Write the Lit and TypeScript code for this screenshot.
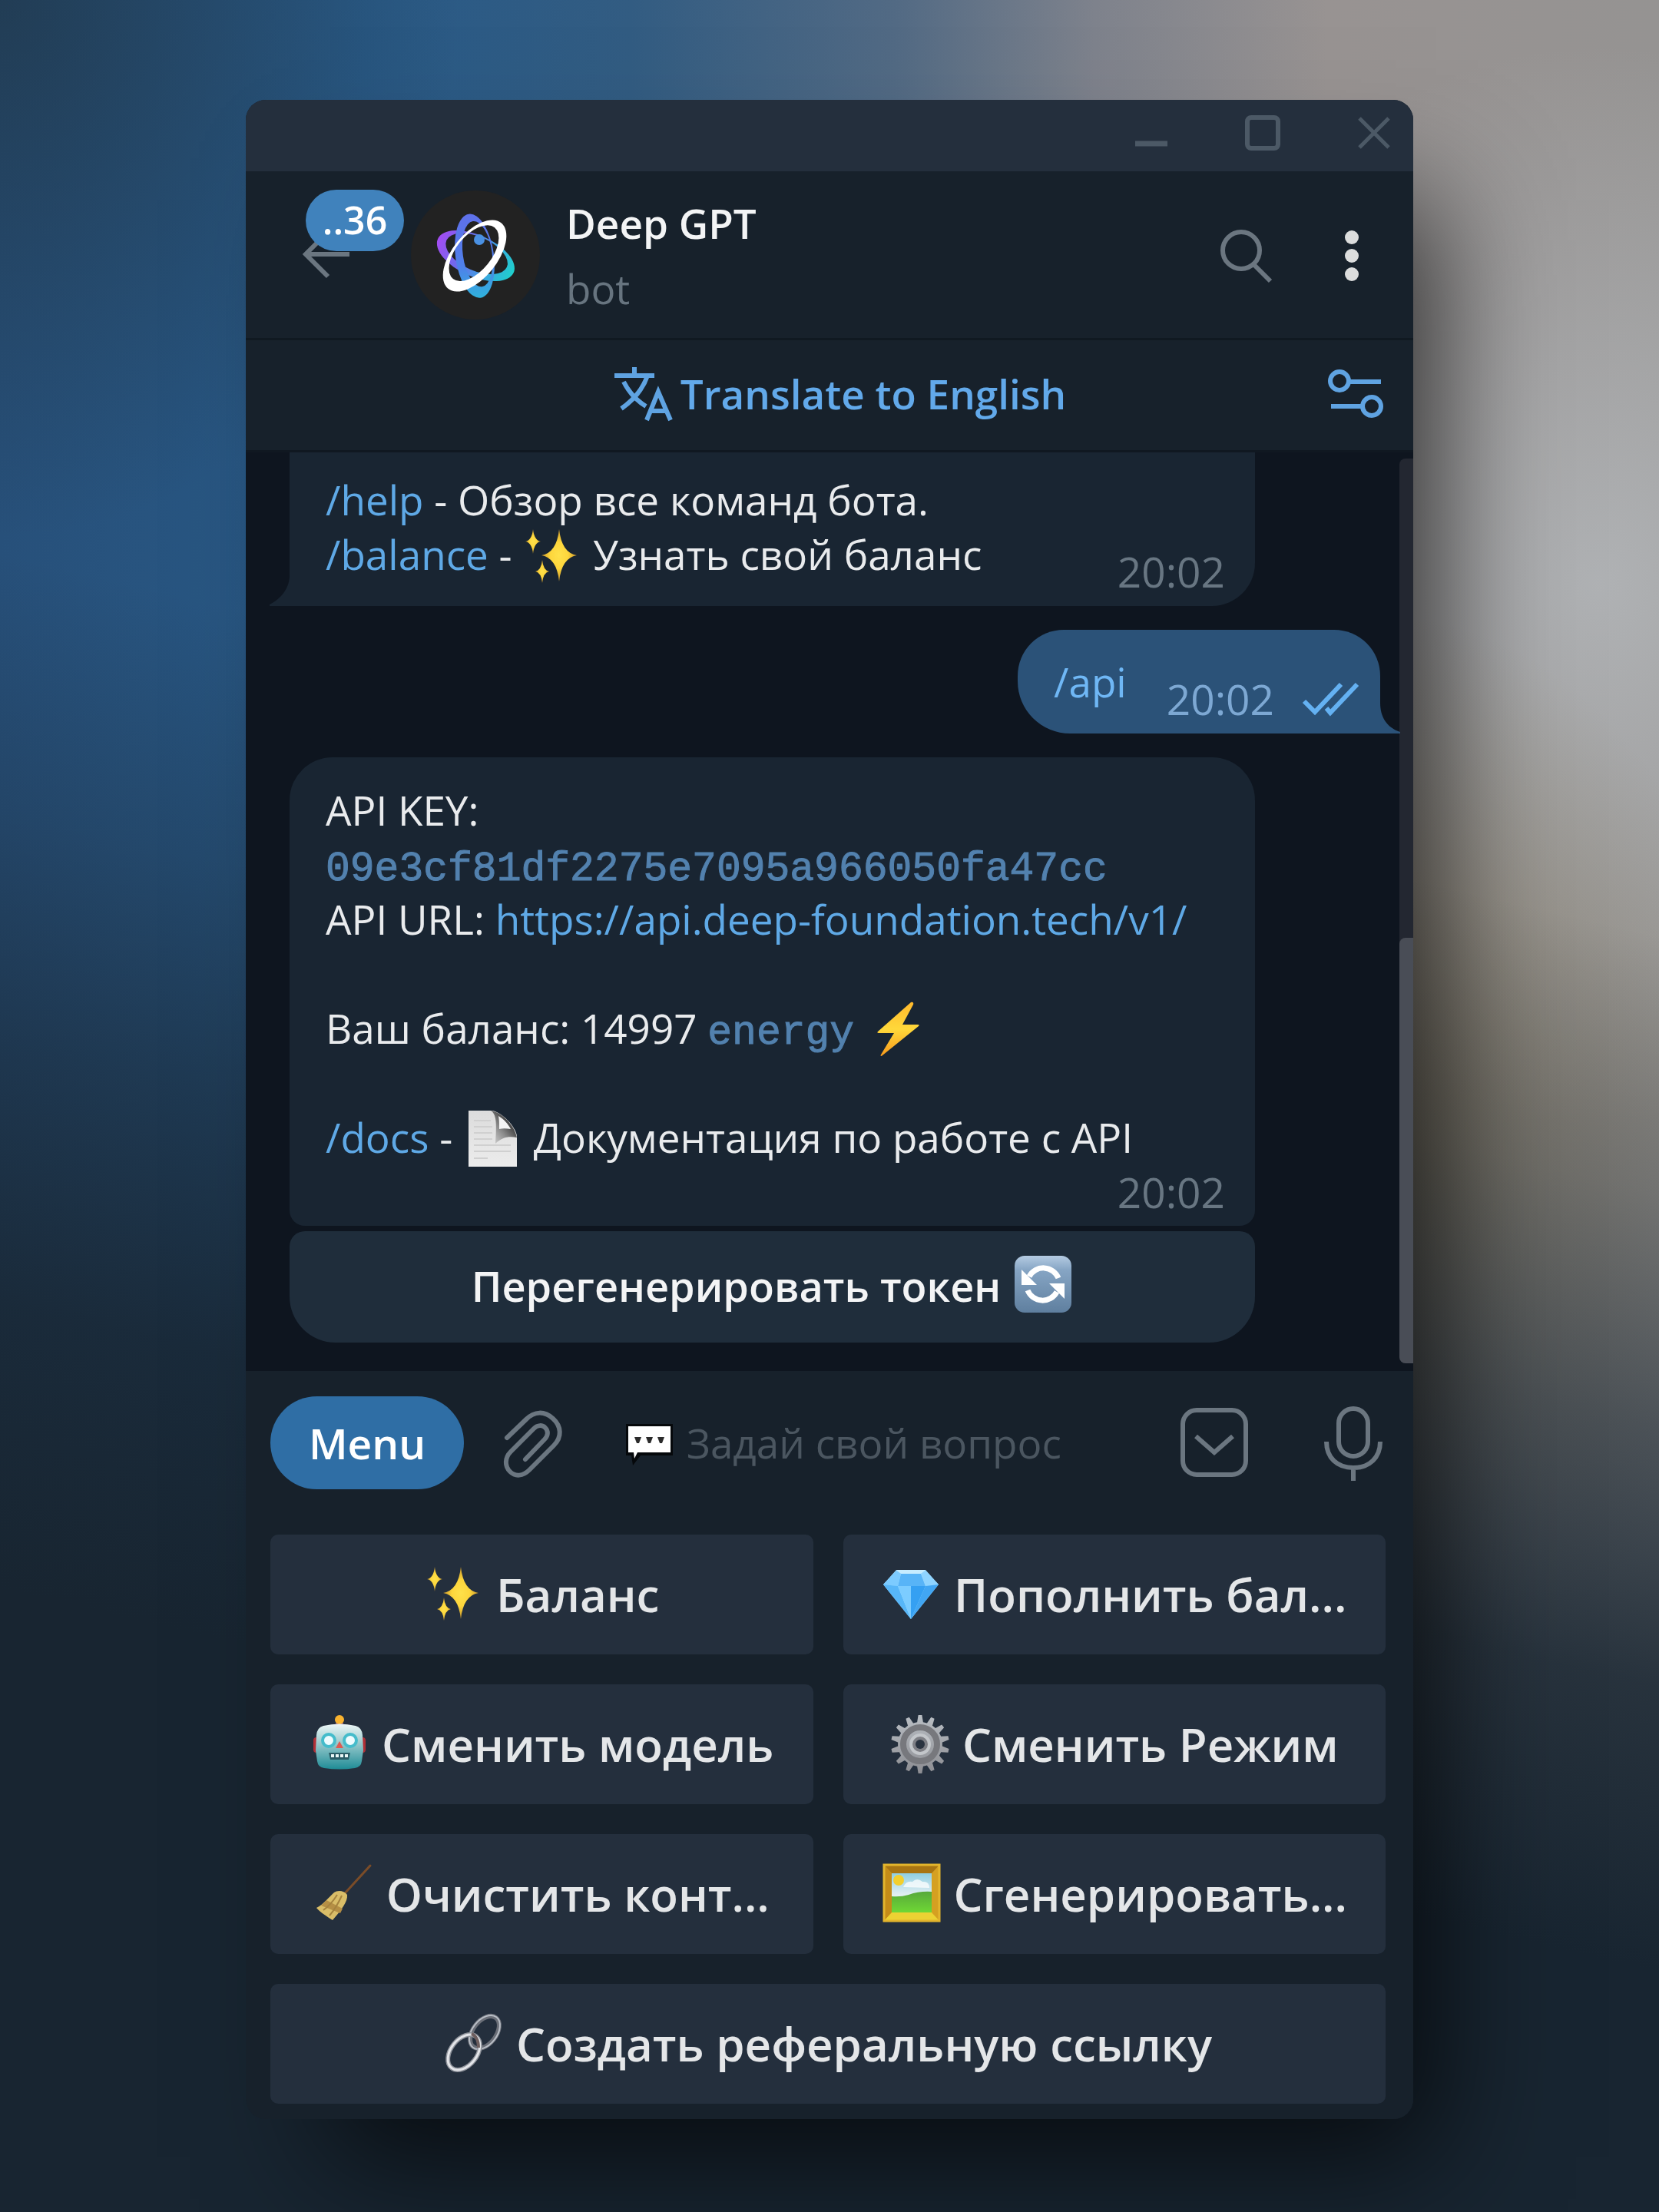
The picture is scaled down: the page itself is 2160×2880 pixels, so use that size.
import { LitElement, html, svg, css, type SVGTemplateResult, type TemplateResult } from "lit";
import { customElement, property } from "lit/decorators.js";

/* ---------- geometry helpers ---------- */

const ellipse = (cx: number, cy: number, rx: number, ry: number) =>
  `M${cx - rx} ${cy}a${rx} ${ry} 0 1 0 ${2 * rx} 0a${rx} ${ry} 0 1 0 ${-2 * rx} 0Z`;

const star = (cx: number, cy: number, rx: number, ry: number) => {
  const kx = rx * 0.14;
  const ky = ry * 0.1;
  return (
    `M${cx} ${cy - ry}Q${cx + kx} ${cy - ky} ${cx + rx} ${cy}` +
    `Q${cx + kx} ${cy + ky} ${cx} ${cy + ry}` +
    `Q${cx - kx} ${cy + ky} ${cx - rx} ${cy}` +
    `Q${cx - kx} ${cy - ky} ${cx} ${cy - ry}Z`
  );
};

const gearPath = (c: number, outer: number, inner: number, teeth: number) => {
  const step = (Math.PI * 2) / teeth;
  const points: string[] = [];
  for (let i = 0; i < teeth; i++) {
    const a = i * step;
    for (const [r, t] of [[inner, -0.3], [outer, -0.14], [outer, 0.14], [inner, 0.3]]) {
      points.push(`${(c + r * Math.sin(a + t * step)).toFixed(2)} ${(c - r * Math.cos(a + t * step)).toFixed(2)}`);
    }
  }
  return `M${points.join("L")}Z`;
};

/* ---------- emoji, each on a 78 x 78 canvas ---------- */

const EMOJI: Record<string, SVGTemplateResult> = {
  sparkles: svg`
    <defs><radialGradient id="sp"><stop offset="0" stop-color="#ffe14a"/><stop offset=".5" stop-color="#fdd63c"/><stop offset="1" stop-color="#c9962a"/></radialGradient></defs>
    <path fill="url(#sp)" d="${star(48, 37, 23, 34)}"/>
    <path fill="url(#sp)" d="${star(14, 19, 10, 16)}"/>
    <path fill="url(#sp)" d="${star(26, 58, 9, 15)}"/>`,
  bolt: svg`
    <defs><linearGradient id="bo" x1="0" y1="0" x2="0" y2="1"><stop offset="0" stop-color="#ffb92c"/><stop offset=".5" stop-color="#ffd83a"/><stop offset="1" stop-color="#f79a1c"/></linearGradient></defs>
    <path fill="url(#bo)" d="M60 2 17 40c-1 1-1 2 1 2h20L21 70c-1 2 0 3 2 1l47-38c1-1 1-2-1-2H49L63 5c1-3-1-4-3-3Z"/>`,
  page: svg`
    <defs>
      <linearGradient id="pa" x1="0" y1="0" x2="0" y2="1"><stop offset="0" stop-color="#dcdcdc"/><stop offset="1" stop-color="#ececec"/></linearGradient>
      <linearGradient id="pb" x1="1" y1="0" x2="0" y2="1"><stop offset=".35" stop-color="#4a4a4a"/><stop offset=".6" stop-color="#8a8a8a"/><stop offset="1" stop-color="#dadada"/></linearGradient>
    </defs>
    <path fill="url(#pa)" d="M7 1h31c12 2 30 20 32 33v40H7Z"/>
    <path stroke="#d0d0d0" stroke-width="2" fill="none" d="M14 14h22M14 22h24M14 30h24M14 38h24M14 46h48M14 54h48M14 63h18"/>
    <path fill="url(#pb)" d="M36 1c7 5 8 14 6 43 9-9 18-10 28-8C67 20 50 3 36 1Z"/>
    <path fill="#f4f4f4" d="M46 8c7 4 13 11 16 17-6-1-11-1-15 0 0-7 0-11-1-17Z"/>`,
  refresh: svg`
    <defs><linearGradient id="re" x1="0" y1="0" x2="0" y2="1"><stop offset="0" stop-color="#b4cbe2"/><stop offset=".25" stop-color="#86a5c4"/><stop offset="1" stop-color="#5f7f9f"/></linearGradient></defs>
    <rect x="2" y="0" width="74" height="74" rx="13" fill="url(#re)"/>
    <path fill="none" stroke="#fff" stroke-width="7" d="M59 29A21 21 0 0 0 21 27M19 45A21 21 0 0 0 57 47"/>
    <path fill="#fff" d="M11 18v20h20ZM67 56V36H47Z"/>`,
  gem: svg`
    <path fill="#9fdcff" d="M19 7h38l17 19-36 45L2 26Z"/>
    <path fill="#c6ecff" d="M19 7h38l-6 5H25Z"/>
    <path fill="#58b4f7" d="M25 12h26l6 16H21Z"/>
    <path fill="#7ccbff" d="M2 26 19 8l6 4-4 16Z"/>
    <path fill="#8fd4ff" d="m74 26-17-18-6 4 6 16Z"/>
    <path fill="#57b6f8" d="m2 26 19 2 17 43Z"/>
    <path fill="#41a6f3" d="m74 26-17 2-19 43Z"/>
    <path fill="#7cccff" d="M21 28h17v43Z"/>
    <path fill="#35a0f2" d="M57 28H38v43Z"/>`,
  robot: svg`
    <defs><linearGradient id="ro" x1="0" y1="0" x2="0" y2="1"><stop offset="0" stop-color="#eef7f7"/><stop offset=".35" stop-color="#a9d2d4"/><stop offset="1" stop-color="#1f8c96"/></linearGradient></defs>
    <path fill="#7b4c86" d="M34 11h10v6H34z"/>
    <circle cx="39" cy="7" r="6" fill="#f9b32f"/>
    <rect x="5" y="30" width="10" height="20" rx="4" fill="#b02f36"/><rect x="63" y="30" width="10" height="20" rx="4" fill="#b02f36"/>
    <path fill="url(#ro)" d="M18 15q21-5 42 0 8 2 9 12l1 20-2 14q-1 8-9 9-20 3-40 0-8-1-9-9L8 47l1-20q1-10 9-12Z"/>
    <circle cx="25" cy="34" r="8" fill="#eefcff" stroke="#45bccb" stroke-width="4"/>
    <circle cx="53" cy="34" r="8" fill="#eefcff" stroke="#45bccb" stroke-width="4"/>
    <path fill="#dd5a52" d="m39 35 5 9H34Z"/>
    <path fill="#2a5c66" d="M25 50h28l-2 9H27Z"/>
    <path stroke="#e9f6f6" stroke-width="4" stroke-dasharray="4 2" d="M28 54h23"/>`,
  gear: svg`
    <defs><linearGradient id="ge" x1="0" y1="0" x2="0" y2="1"><stop offset="0" stop-color="#b9bec4"/><stop offset="1" stop-color="#8c8d92"/></linearGradient></defs>
    <path fill="url(#ge)" d="${gearPath(39, 38, 29, 14)}"/>
    <circle cx="39" cy="39" r="22" fill="none" stroke="#77787d" stroke-width="8"/>
    <circle cx="39" cy="39" r="12" fill="#7e7f85" stroke="#c3c6ca" stroke-width="4"/>
    <circle cx="39" cy="39" r="6" fill="#2a3340"/>`,
  broom: svg`
    <path stroke="#7a4c28" stroke-width="3" stroke-linecap="round" d="M73 2 40 38"/>
    <path fill="#d9bd68" d="M26 37c4-3 13-3 17 3 1 9-8 20-19 33C18 69 8 63 3 57 13 52 18 44 26 37Z"/>
    <path fill="#b58f45" d="m16 47 21 11-3 6L9 54Z"/>
    <path fill="none" stroke="#a5833e" stroke-width="2" d="M12 60c7-5 13-12 18-20M20 67c7-8 12-17 16-26"/>`,
  picture: svg`
    <defs>
      <linearGradient id="pi" x1="0" y1="0" x2="0" y2="1"><stop offset="0" stop-color="#8fcfe2"/><stop offset=".55" stop-color="#e2eff2"/></linearGradient>
      <linearGradient id="pg" x1="0" y1="0" x2="0" y2="1"><stop offset="0" stop-color="#57a93a"/><stop offset="1" stop-color="#6fd835"/></linearGradient>
    </defs>
    <path fill="#d5a021" d="M2 0h74v75H2z"/>
    <path fill="#a97512" d="M2 0h74L65 12H13Z"/>
    <path fill="#c48c18" d="M2 0v75l11-12V12Z"/>
    <path fill="#ecd233" d="M2 75h74L65 63H13Z"/>
    <path fill="none" stroke="#e3b52c" stroke-width="3" d="M3 1h72v73H3z"/>
    <path fill="url(#pi)" d="M13 12h52v51H13z"/>
    <circle cx="22" cy="21" r="7" fill="#f3cf2d"/>
    <path fill="#fff" opacity=".75" d="M28 30q4-9 12-7 6-6 13 0 9-1 9 8Z"/>
    <path fill="url(#pg)" d="M13 42q12 1 22-2 14-5 30-4v27H13Z"/>`,
  link: svg`
    <g fill="none" stroke-width="6">
      <ellipse cx="53" cy="24" rx="15" ry="24" transform="rotate(38 53 24)" stroke="#6b6f78"/>
      <ellipse cx="53" cy="24" rx="16" ry="25" transform="rotate(38 53 24)" stroke="#b9bec6" stroke-width="2"/>
      <ellipse cx="26" cy="50" rx="17" ry="26" transform="rotate(38 26 50)" stroke="#8f939b"/>
      <ellipse cx="26" cy="50" rx="17" ry="26" transform="rotate(38 26 50)" stroke="#e3e5e9" stroke-width="3"/>
      <path d="M36 26q9 4 9 18" stroke="#6d5e5e" stroke-width="4"/>
    </g>`,
  speech: svg`
    <path fill="#05080b" d="M9 11h61v41H28L18 65l-2-13H9Z"/>
    <path fill="#fff" d="M12 14h55v34H24l-4 8-1-8h-7Z"/>
    <path fill="#2b2b2b" d="M20 28h9l-3 8h-3ZM35 28h9l-3 8h-3ZM50 28h9l-3 8h-3Z"/>`,
};

const emoji = (name: string): TemplateResult =>
  html`<svg class="emoji" viewBox="0 0 78 78" aria-hidden="true">${EMOJI[name]}</svg>`;

const emojiStyles = css`
  .emoji {
    display: inline-block;
    width: 78px;
    height: 78px;
    flex: none;
    margin: -10px 0;
    vertical-align: -12px;
  }
`;

const resetStyles = css`
  * { box-sizing: border-box; }
  button {
    font: inherit;
    color: inherit;
    background: none;
    border: 0;
    margin: 0;
    padding: 0;
    cursor: pointer;
  }
  a { color: inherit; text-decoration: none; }
  svg { display: block; overflow: visible; }
`;

/* ---------- message bubble ---------- */

@customElement("chat-message")
export class ChatMessage extends LitElement {
  @property({ type: Boolean, reflect: true }) out = false;
  @property({ type: Boolean, reflect: true }) stacked = false;
  @property() time = "";

  static styles = [
    resetStyles,
    css`
      :host { display: block; }
      .bubble {
        position: relative;
        display: flex;
        align-items: flex-end;
        justify-content: space-between;
        padding: 32px 39px 10px 47px;
        background: #192532;
        color: #e9ebed;
      }
      .text { margin-bottom: 22px; }
      .meta {
        display: flex;
        align-items: center;
        gap: 38px;
        color: #687682;
        font-size: 55px;
      }
      .cut { padding-top: 26px; border-radius: 0 0 56px 0; }
      .full {
        flex-direction: column;
        align-items: stretch;
        padding-top: 33px;
        padding-bottom: 9px;
        border-radius: 56px 56px 20px 20px;
      }
      .full .text { margin: 0; }
      .full .meta { align-self: flex-end; }
      .sent {
        gap: 52px;
        padding-right: 28px;
        background: #2b5278;
        color: #6fb7f5;
        border-radius: 60px 60px 0 68px;
      }
      .sent .meta { color: #7da8d3; }
      .tail {
        position: absolute;
        bottom: 0;
        width: 26px;
        height: 40px;
        fill: #192532;
      }
      .left { right: 100%; }
      .right { left: 100%; fill: #2b5278; }
      .checks { width: 72px; height: 42px; fill: none; stroke: #64b1f2; stroke-width: 6; }
    `,
  ];

  render() {
    const kind = this.out ? "sent" : this.stacked ? "full" : "cut";
    return html`
      <div class="bubble ${kind}">
        <div class="text"><slot></slot></div>
        <div class="meta">
          <time>${this.time}</time>
          ${this.out
            ? html`<svg class="checks" viewBox="0 0 72 42" role="img" aria-label="Прочитано">
                <path d="M1 24 15 38 49 2M30 33l5 6L70 2" />
              </svg>`
            : ""}
        </div>
        ${this.stacked
          ? ""
          : this.out
            ? html`<svg class="tail right" viewBox="0 0 26 40"><path d="M-1 0H0C0 18 8 32 26 38V40H-1Z" /></svg>`
            : html`<svg class="tail left" viewBox="0 0 26 40"><path d="M27 0H26C26 16 16 30 0 38V40H27Z" /></svg>`}
      </div>
    `;
  }
}

/* ---------- reply keyboard ---------- */

interface Key {
  icon: string;
  label: string;
  wide?: boolean;
}

@customElement("reply-keyboard")
export class ReplyKeyboard extends LitElement {
  @property({ attribute: false }) keys: Key[] = [];

  static styles = [
    resetStyles,
    emojiStyles,
    css`
      :host {
        display: grid;
        grid-template-columns: 1fr 1fr;
        gap: 39px;
        padding: 27px 36px 20px 32px;
      }
      .key {
        display: flex;
        align-items: center;
        justify-content: center;
        gap: 16px;
        min-width: 0;
        height: 156px;
        border-radius: 10px;
        background: #242f3d;
        color: #e4e6e8;
        font-size: 60px;
        font-weight: 600;
        white-space: nowrap;
      }
      .wide { grid-column: 1 / -1; }
    `,
  ];

  render() {
    return this.keys.map(
      (key) => html`<button class="key ${key.wide ? "wide" : ""}" type="button">
        ${emoji(key.icon)}<span>${key.label}</span>
      </button>`,
    );
  }
}

/* ---------- window ---------- */

@customElement("app-root")
export class AppRoot extends LitElement {
  private keys: Key[] = [
    { icon: "sparkles", label: "Баланс" },
    { icon: "gem", label: "Пополнить бал..." },
    { icon: "robot", label: "Сменить модель" },
    { icon: "gear", label: "Сменить Режим" },
    { icon: "broom", label: "Очистить конт..." },
    { icon: "picture", label: "Сгенерировать..." },
    { icon: "link", label: "Создать реферальную ссылку", wide: true },
  ];

  static styles = [
    resetStyles,
    emojiStyles,
    css`
      :host {
        display: block;
        min-height: 100vh;
        box-sizing: border-box;
        padding: 130px min(320px, 15vw) 120px;
        font: 400 53px/71px "Open Sans", "Noto Sans", sans-serif;
        background:
          radial-gradient(ellipse 600px 700px at 0 0, rgba(30, 48, 60, 0.6), transparent),
          linear-gradient(193deg, rgba(24, 37, 49, 0) 36%, rgba(24, 37, 49, 0.25) 46%, rgba(24, 37, 49, 0.58) 55%, rgba(24, 37, 49, 0.88) 65%, #182531 76%),
          radial-gradient(ellipse 500px 700px at 1800px 1500px, rgba(112, 98, 62, 0.5), transparent),
          radial-gradient(ellipse 600px 700px at 2080px 760px, rgba(180, 183, 186, 0.85), transparent),
          linear-gradient(90deg, #27507a 0, #295a87 22%, #325c82 38%, #526a84 54%, #7e828c 66%, #989392 80%, #959392 100%);
      }
      .window {
        display: flex;
        flex-direction: column;
        overflow: hidden;
        border-radius: 26px;
        background: #17212b;
      }
      .shadow {
        border-radius: 26px;
        box-shadow: 70px 90px 150px -40px rgba(0, 0, 0, 0.7);
      }
      .titlebar {
        display: flex;
        justify-content: flex-end;
        align-items: center;
        gap: 97px;
        height: 93px;
        padding: 0 27px 7px 0;
        background: #242f3d;
      }
      .caption { width: 48px; height: 48px; fill: none; stroke: #4c5966; stroke-width: 5; }
      .header {
        display: flex;
        align-items: center;
        height: 220px;
        padding: 0 56px 0 74px;
        border-bottom: 3px solid #101921;
      }
      .back { position: relative; margin-right: 77px; }
      .arrow { width: 64px; height: 64px; fill: none; stroke: #6b7680; stroke-width: 6; }
      .badge {
        position: absolute;
        left: 4px;
        top: -53px;
        min-width: 128px;
        height: 80px;
        border-radius: 40px;
        background: #4082bc;
        color: #fff;
        font-size: 50px;
        font-weight: 600;
        line-height: 78px;
        text-align: center;
      }
      .avatar { width: 168px; height: 168px; }
      .peer { flex: 1; padding: 3px 0 0 34px; line-height: 85px; }
      .name { margin: 0; font-size: inherit; font-weight: 600; color: #f3f4f5; }
      .status { margin: 0; color: #67747f; }
      .tools { display: flex; align-items: center; gap: 77px; padding-top: 3px; }
      .search { width: 72px; height: 72px; fill: none; stroke: #6b7680; stroke-width: 6; }
      .dots { width: 48px; height: 72px; fill: #dcdddd; }
      .translate {
        display: flex;
        align-items: center;
        height: 146px;
        padding: 0 36px 4px 139px;
        border-bottom: 3px solid #101821;
        color: #62a9ea;
      }
      .offer {
        display: flex;
        flex: 1;
        justify-content: center;
        align-items: center;
        gap: 11px;
        font-weight: 600;
      }
      .glyph { width: 76px; height: 76px; fill: none; stroke: #5fa3e2; stroke-width: 6; }
      .chat {
        display: flex;
        background: #0e151f;
      }
      .feed {
        display: flex;
        flex: 1;
        flex-direction: column;
        gap: 31px;
        min-width: 0;
        padding: 0 25px 37px 57px;
      }
      .incoming { margin-right: 163px; }
      .outgoing { align-self: flex-end; }
      .group { display: flex; flex-direction: column; gap: 7px; }
      .regen {
        display: flex;
        justify-content: center;
        align-items: center;
        gap: 16px;
        height: 145px;
        padding-bottom: 3px;
        border-radius: 20px 20px 60px 60px;
        background: #1f2d3b;
        color: #f3f4f5;
        font-size: 54px;
        font-weight: 600;
      }
      .ref { color: #5fa9e6; }
      .mono {
        font-family: "Liberation Mono", monospace;
        line-height: 1;
        color: #5281ae;
        -webkit-text-stroke: 1px #5281ae;
      }
      .para { margin: 0 0 71px; }
      .last { margin: 0; }
      .rail {
        display: flex;
        flex-direction: column;
        justify-content: flex-end;
        width: 18px;
        margin: 8px 0 10px;
        border-radius: 8px 0 0 8px;
        background: #232731;
      }
      .thumb { height: 47%; border-radius: 8px 0 0 8px; background: #494d56; }
      .compose {
        display: flex;
        align-items: center;
        height: 186px;
        padding: 0 38px 0 32px;
      }
      .menu {
        width: 252px;
        height: 121px;
        border-radius: 61px;
        background: #2f6ea5;
        color: #fff;
        font-size: 55px;
        font-weight: 600;
      }
      .icon { width: 80px; height: 96px; fill: none; stroke: #6b7680; stroke-width: 6; }
      .attach { margin: 0 72px 0 50px; }
      .toggle { margin-right: 100px; }
      .field { display: flex; flex: 1; align-items: center; gap: 10px; min-width: 0; }
      .input {
        flex: 1;
        min-width: 0;
        padding: 0;
        border: 0;
        outline: 0;
        background: none;
        color: #e9ebed;
        font: inherit;
      }
      .input::placeholder { color: #4b5660; opacity: 1; }
    `,
  ];

  private logo() {
    return svg`
      <defs>
        <linearGradient id="la" x1="0" y1="0" x2="0" y2="1"><stop offset="0" stop-color="#5f70ea"/><stop offset=".6" stop-color="#4f80ea"/><stop offset="1" stop-color="#2fb2dc"/></linearGradient>
        <linearGradient id="lb" x1="0" y1="0" x2="1" y2="0"><stop offset="0" stop-color="#a44cf2"/><stop offset=".35" stop-color="#6a6cec"/><stop offset=".7" stop-color="#3aa6e0"/><stop offset="1" stop-color="#1fd0cc"/></linearGradient>
      </defs>
      <circle cx="84" cy="84" r="84" fill="#222"/>
      <path fill="url(#lb)" fill-rule="evenodd" transform="rotate(24 84 86)" d="${ellipse(84, 85, 54, 27)}${ellipse(84, 82, 43, 22)}"/>
      <path fill="url(#la)" fill-rule="evenodd" transform="rotate(-8 84 85)" d="${ellipse(83, 85, 25, 55)}${ellipse(87, 83, 19, 43)}"/>
      <circle cx="89" cy="64" r="7" fill="#4a90e2"/>
      <path fill="#fff" fill-rule="evenodd" transform="rotate(-51 83 85)" d="${ellipse(83, 85, 55, 29)}${ellipse(85, 82, 43, 23)}"/>`;
  }

  render() {
    return html`
      <div class="shadow">
        <main class="window">
          <div class="titlebar">
            <button type="button" aria-label="Свернуть">
              <svg class="caption" viewBox="0 0 48 48"><path stroke-width="7" d="M3 38h42" /></svg>
            </button>
            <button type="button" aria-label="Развернуть">
              <svg class="caption" viewBox="0 0 48 48"><rect x="4" y="4" width="40" height="40" rx="5" stroke-width="6" /></svg>
            </button>
            <button type="button" aria-label="Закрыть">
              <svg class="caption" viewBox="0 0 48 48"><path d="M5 5l38 38M43 5 5 43" /></svg>
            </button>
          </div>

          <header class="header">
            <button class="back" type="button" aria-label="Назад">
              <svg class="arrow" viewBox="0 0 64 64"><path d="M61 31H3M33 60 4 31 33 2" /></svg>
              <span class="badge">..36</span>
            </button>
            <svg class="avatar" viewBox="0 0 168 168" aria-hidden="true">${this.logo()}</svg>
            <div class="peer">
              <h1 class="name">Deep GPT</h1>
              <p class="status">bot</p>
            </div>
            <div class="tools">
              <button type="button" aria-label="Поиск">
                <svg class="search" viewBox="0 0 72 72"><circle cx="29" cy="29" r="24" /><path d="m45 47 22 22" /></svg>
              </button>
              <button type="button" aria-label="Ещё">
                <svg class="dots" viewBox="0 0 48 72"><circle cx="24" cy="12" r="9" /><circle cx="24" cy="36" r="9" /><circle cx="24" cy="60" r="9" /></svg>
              </button>
            </div>
          </header>

          <div class="translate">
            <button class="offer" type="button">
              <svg class="glyph" viewBox="0 0 76 76">
                <path d="M1 14h52M27 3v11M44 14C38 32 27 45 10 57M13 22c7 14 16 24 29 32M43 72l15-37 16 37M48 60h21" />
              </svg>
              <span>Translate to English</span>
            </button>
            <button type="button" aria-label="Настройки перевода">
              <svg class="glyph" viewBox="0 0 76 76">
                <circle cx="16" cy="21" r="12" /><path d="M28 22h42M5 54h41" /><circle cx="58" cy="54" r="12" />
              </svg>
            </button>
          </div>

          <section class="chat">
            <div class="feed">
              <chat-message class="incoming" time="20:02">
                <a class="ref" href="#help">/help</a> - Обзор все команд бота.<br />
                <a class="ref" href="#balance">/balance</a> - ${emoji("sparkles")} Узнать свой баланс
              </chat-message>
              <chat-message class="outgoing" out time="20:02">/api</chat-message>
              <div class="group incoming">
                <chat-message stacked time="20:02">
                  <p class="para">
                    API KEY:<br />
                    <code class="mono">09e3cf81df2275e7095a966050fa47cc</code><br />
                    API URL: <a class="ref" href="https://api.deep-foundation.tech/v1/">https://api.deep-foundation.tech/v1/</a>
                  </p>
                  <p class="para">Ваш баланс: 14997 <code class="mono">energy</code> ${emoji("bolt")}</p>
                  <p class="last"><a class="ref" href="#docs">/docs</a> - ${emoji("page")} Документация по работе с API</p>
                </chat-message>
                <button class="regen" type="button"><span>Перегенерировать токен</span>${emoji("refresh")}</button>
              </div>
            </div>
            <div class="rail"><div class="thumb"></div></div>
          </section>

          <form class="compose">
            <button class="menu" type="button">Menu</button>
            <button class="attach" type="button" aria-label="Прикрепить файл">
              <svg class="icon" viewBox="0 0 80 96">
                <path stroke-linecap="round" d="M6 42 31 18c11-11 24-11 35-1s12 24 1 35L35 84c-8 8-18 9-25 2s-7-18 1-26l30-30c5-5 11-5 15-1s4 10-1 15L30 70" />
              </svg>
            </button>
            <div class="field">
              <label for="question" aria-label="Сообщение">${emoji("speech")}</label>
              <input class="input" id="question" type="text" placeholder="Задай свой вопрос" />
            </div>
            <button class="toggle" type="button" aria-label="Клавиатура бота">
              <svg class="icon" viewBox="0 0 80 96"><rect x="-2" y="6" width="82" height="84" rx="18" /><path d="M15 40l24 21 24-21" /></svg>
            </button>
            <button type="button" aria-label="Голосовое сообщение">
              <svg class="icon" viewBox="0 0 80 96"><rect x="21" y="4" width="38" height="62" rx="19" /><path d="M5 47c0 21 14 34 35 34s35-13 35-34M40 81v17" /></svg>
            </button>
          </form>

          <reply-keyboard .keys=${this.keys}></reply-keyboard>
        </main>
      </div>
    `;
  }
}
